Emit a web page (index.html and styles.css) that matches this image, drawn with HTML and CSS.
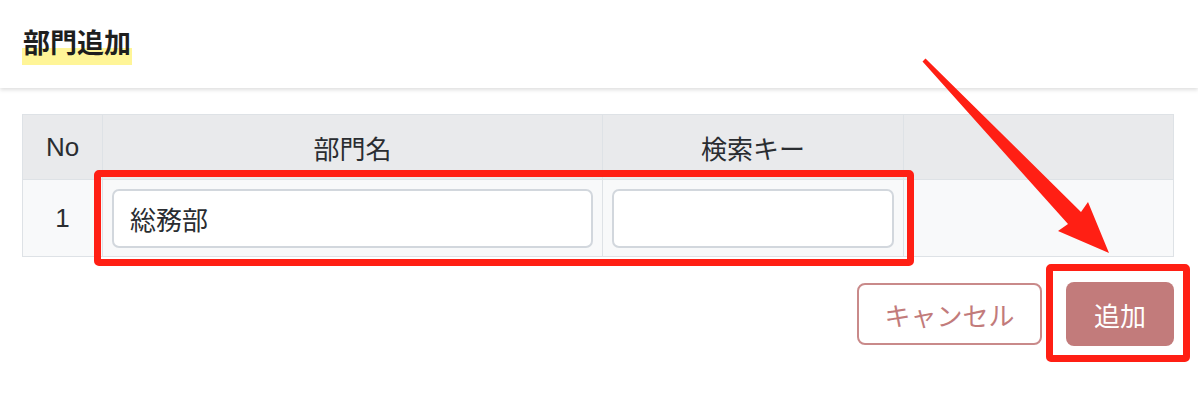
FILE: index.html
```html
<!DOCTYPE html>
<html lang="ja">
<head>
<meta charset="utf-8">
<title>部門追加</title>
<link rel="stylesheet" href="styles.css">
</head>
<body>
<header class="header">
  <h1 class="title">部門追加</h1>
</header>
<main class="main">
  <table class="grid">
    <colgroup>
      <col class="c-no">
      <col class="c-name">
      <col class="c-key">
      <col class="c-rest">
    </colgroup>
    <thead>
      <tr>
        <th>No</th>
        <th>部門名</th>
        <th>検索キー</th>
        <th></th>
      </tr>
    </thead>
    <tbody>
      <tr>
        <td class="no">1</td>
        <td class="inp-cell"><input class="field" type="text" value="総務部"></td>
        <td class="inp-cell"><input class="field" type="text" value=""></td>
        <td></td>
      </tr>
    </tbody>
  </table>
  <div class="actions">
    <button class="btn btn-outline" type="button">キャンセル</button>
    <button class="btn btn-fill" type="button">追加</button>
  </div>
</main>
<div class="mark mark-inputs"></div>
<div class="mark mark-add"></div>
<svg class="arrow" width="1198" height="416" viewBox="0 0 1198 416" aria-hidden="true">
  <polygon points="922.5,61.5 925.5,58.5 1081,212 1088,202 1109,253 1058,231 1068,224" fill="#ff1f14"/>
</svg>
</body>
</html>
```

FILE: styles.css
```css
* { box-sizing: border-box; }

html, body {
  margin: 0;
  padding: 0;
  background: #ffffff;
}

body {
  position: relative;
  width: 1198px;
  height: 416px;
  overflow: hidden;
  font-family: "Liberation Sans", "Noto Sans CJK JP", sans-serif;
  color: #212529;
}

.header {
  height: 88px;
  padding: 31px 22px 0;
  background: #ffffff;
  box-shadow: 0 2px 4px rgba(0, 0, 0, 0.13);
  position: relative;
  z-index: 1;
}

.title {
  display: inline-block;
  margin: 0;
  padding: 0 1px 7px;
  font-size: 27px;
  line-height: 27px;
  font-weight: bold;
  color: #1e1e1e;
  background: linear-gradient(to bottom, transparent 17px, #fff597 17px);
}

.main {
  padding: 26px 24px 0 22px;
}

.grid {
  width: 1152px;
  border-collapse: collapse;
  table-layout: fixed;
  font-size: 26px;
}

.c-no { width: 80px; }
.c-name { width: 500px; }
.c-key { width: 301px; }

.grid th,
.grid td {
  border: 1px solid #dee2e6;
  padding: 0;
  text-align: center;
  font-weight: normal;
  color: #2a2d31;
}

.grid thead tr {
  height: 65px;
  background: #e9eaec;
}

.grid tbody tr {
  height: 77px;
  background: #f8f9fa;
}

.grid td.inp-cell {
  padding: 9px 9px 8px 9px;
}

.field {
  display: block;
  width: 100%;
  height: 59px;
  margin: 0;
  padding: 0 16px;
  border: 2px solid #d2d7dd;
  border-radius: 7px;
  background: #ffffff;
  font-family: "Liberation Sans", "Noto Sans CJK JP", sans-serif;
  font-size: 26px;
  color: #2a2d31;
  outline: none;
}

.actions {
  display: flex;
  justify-content: flex-end;
  gap: 24px;
  margin-top: 25px;
}

.btn {
  font-family: "Liberation Sans", "Noto Sans CJK JP", sans-serif;
  font-size: 26px;
  border-radius: 8px;
  margin: 0;
  padding: 0;
  cursor: pointer;
}

.btn-outline {
  width: 185px;
  height: 62px;
  margin-top: 1px;
  background: #ffffff;
  border: 2px solid #c98a8a;
  color: #c27b7b;
}

.btn-fill {
  width: 108px;
  height: 64px;
  background: #c27b7b;
  border: 0;
  color: #ffffff;
}

.mark {
  position: absolute;
  border: 7px solid #ff1f14;
  border-radius: 5px;
  z-index: 2;
}

.mark-inputs {
  left: 94px;
  top: 170px;
  width: 820px;
  height: 96px;
}

.mark-add {
  left: 1046px;
  top: 264px;
  width: 144px;
  height: 98px;
}

.arrow {
  position: absolute;
  left: 0;
  top: 0;
  z-index: 3;
}
```
